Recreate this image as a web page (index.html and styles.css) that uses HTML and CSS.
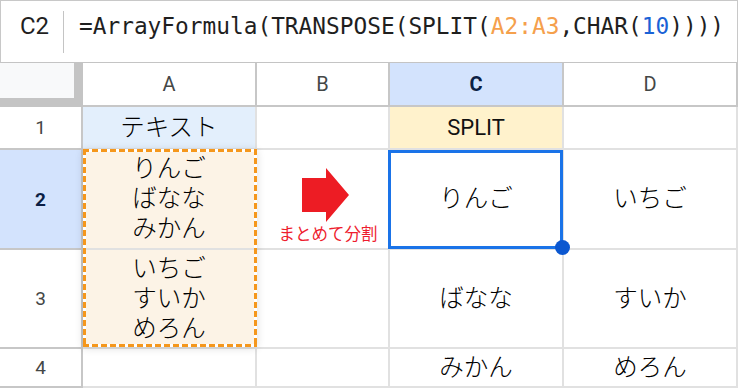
FILE: index.html
```html
<!DOCTYPE html>
<html lang="ja">
<head>
<meta charset="utf-8">
<title>SPLIT TRANSPOSE</title>
<link rel="stylesheet" href="styles.css">
</head>
<body>
<div class="app">
  <div class="fbar">
    <div class="ref">C2</div>
    <div class="sep"></div>
    <div class="formula">=ArrayFormula(TRANSPOSE(SPLIT(<span class="rg">A2:A3</span>,CHAR(<span class="num">10</span>))))</div>
  </div>
  <div class="grid">
    <div class="corner"></div>
    <div class="ch">A</div>
    <div class="ch">B</div>
    <div class="ch on">C</div>
    <div class="ch">D</div>

    <div class="rh">1</div>
    <div class="c a1">テキスト</div>
    <div class="c"></div>
    <div class="c c1">SPLIT</div>
    <div class="c"></div>

    <div class="rh on">2</div>
    <div class="c rng anchor">りんご<br>ばなな<br>みかん<div class="range-box"></div></div>
    <div class="c b2">
      <svg class="arrow" width="48" height="54" viewBox="0 0 48 54"><polygon points="0,10 24,10 24,0 47,27 24,54 24,44 0,44" fill="#ed1c24"/></svg>
      <span class="note">まとめて分割</span>
    </div>
    <div class="c anchor">りんご<div class="sel-box"><span class="handle"></span></div></div>
    <div class="c">いちご</div>

    <div class="rh">3</div>
    <div class="c rng">いちご<br>すいか<br>めろん</div>
    <div class="c"></div>
    <div class="c">ばなな</div>
    <div class="c">すいか</div>

    <div class="rh">4</div>
    <div class="c"></div>
    <div class="c"></div>
    <div class="c">みかん</div>
    <div class="c">めろん</div>
  </div>
</div>
</body>
</html>
```
FILE: styles.css
```css
* { box-sizing: border-box; }
html, body { margin: 0; padding: 0; background: #fff; }
body { width: 740px; height: 388px; overflow: hidden; }

.app { width: 738px; }

.fbar {
  height: 63px;
  display: flex;
  align-items: flex-start;
  padding: 10px 0 0 19px;
  border: 1px solid #c8c8c8;
  border-bottom: 1px solid #c4c4c4;
}
.ref {
  font-family: Roboto, "Noto Sans", sans-serif;
  font-size: 24px;
  line-height: 30px;
  color: #1f1f1f;
  width: 29px;
}
.sep {
  width: 1px;
  height: 42px;
  margin-left: 14px;
  background: #c4c4c4;
}
.formula {
  margin-left: 15px;
  font-family: "DejaVu Sans Mono", "Liberation Mono", monospace;
  font-size: 22.8px;
  line-height: 30px;
  color: #1f1f1f;
  white-space: nowrap;
}
.rg { color: #f5a04c; }
.num { color: #1a62d6; }

.grid {
  display: grid;
  grid-template-columns: 83px 174px 133px 174px 174px;
  grid-template-rows: 44px 43px 100px 99px 39px;
}

.corner {
  background: #f8f9fa;
  border-right: 9px solid #c4c4c4;
  border-bottom: 9px solid #c4c4c4;
}
.ch, .rh {
  display: flex;
  align-items: center;
  justify-content: center;
  font-family: Roboto, "Noto Sans", sans-serif;
  color: #444746;
  border-right: 2px solid #c7c7c7;
  border-bottom: 2px solid #c7c7c7;
}
.ch { font-size: 20px; }
.rh { font-size: 19px; }
.ch.on, .rh.on {
  background: #d3e3fd;
  color: #0b1f45;
  font-weight: 700;
}

.c {
  display: flex;
  align-items: center;
  justify-content: center;
  text-align: center;
  font-family: Roboto, "Noto Sans CJK JP", sans-serif;
  font-size: 24.5px;
  font-weight: 300;
  line-height: 30px;
  color: #000;
  border-right: 2px solid #e1e1e1;
  border-bottom: 2px solid #e1e1e1;
}
.a1 { background: #e3effc; }
.c1 { background: #fff2cc; font-size: 22px; font-weight: 400; color: #111; }
.rng { background: #fcf3e6; }
.anchor { position: relative; }

.range-box {
  position: absolute;
  left: 0;
  top: -1px;
  width: calc(100% + 2px);
  height: 198px;
  z-index: 2;
  box-shadow: 0 1px 8px rgba(0, 0, 0, 0.14);
  background:
    repeating-linear-gradient(90deg, #f5971c 0 6px, #fff 6px 9px) top left / 100% 3px no-repeat,
    repeating-linear-gradient(90deg, #f5971c 0 6px, #fff 6px 9px) bottom left / 100% 3px no-repeat,
    repeating-linear-gradient(180deg, #f5971c 0 6px, #fff 6px 9px) top left / 3px 100% no-repeat,
    repeating-linear-gradient(180deg, #f5971c 0 6px, #fff 6px 9px) top right / 3px 100% no-repeat;
}

.b2 {
  flex-direction: column;
  justify-content: flex-start;
  padding-top: 18px;
}
.arrow { display: block; margin-left: 6px; }
.note {
  margin-top: 3px;
  margin-left: 11px;
  font-size: 16.5px;
  font-weight: 400;
  line-height: 20px;
  color: #ee1d2e;
  white-space: nowrap;
}

.sel-box {
  position: absolute;
  left: -2px;
  top: 0;
  width: 175px;
  height: 99px;
  border: 3px solid #1a73e8;
  z-index: 3;
}
.handle {
  position: absolute;
  right: -10px;
  bottom: -9px;
  width: 15px;
  height: 15px;
  border-radius: 50%;
  background: #0b57d0;
}
```
